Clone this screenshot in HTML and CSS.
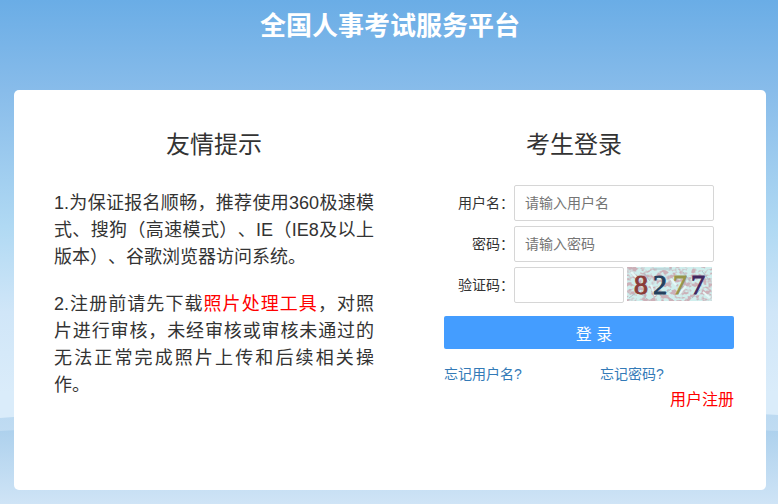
FILE: index.html
```html
<!DOCTYPE html>
<html lang="zh-CN">
<head>
    <meta charset="UTF-8">
    <meta name="viewport" content="width=device-width, initial-scale=1.0">
    <title>全国人事考试服务平台</title>
    <link rel="stylesheet" href="styles.css">
</head>
<body>
    <svg class="waves" viewBox="0 0 778 92" preserveAspectRatio="none" aria-hidden="true">
        <defs>
            <linearGradient id="wave-back" x1="0" y1="0" x2="0" y2="1">
                <stop offset="0" stop-color="#bbd9f1"/>
                <stop offset="1" stop-color="#cfe4f5"/>
            </linearGradient>
            <linearGradient id="wave-front" x1="0" y1="0" x2="0" y2="1">
                <stop offset="0" stop-color="#aacfec"/>
                <stop offset="1" stop-color="#cfe4f6"/>
            </linearGradient>
        </defs>
        <path fill="url(#wave-back)" d="M0 6 C200 -8 560 -6 778 3 V92 H0 Z"/>
        <path fill="url(#wave-front)" d="M0 19 C200 8 560 8 778 19 V92 H0 Z"/>
    </svg>

    <h1>全国人事考试服务平台</h1>

    <main class="card">
        <section class="tips">
            <h2>友情提示</h2>
            <p>1.为保证报名顺畅，推荐使用360极速模式、搜狗（高速模式）、IE（IE8及以上版本）、谷歌浏览器访问系统。</p>
            <p>2.注册前请先下载<a href="#">照片处理工具</a>，对照片进行审核，未经审核或审核未通过的无法正常完成照片上传和后续相关操作。</p>
        </section>

        <section class="login">
            <h2>考生登录</h2>
            <form class="login-form">
                <div class="form-row">
                    <label for="username">用户名：</label>
                    <input type="text" id="username" placeholder="请输入用户名">
                </div>
                <div class="form-row">
                    <label for="password">密码：</label>
                    <input type="password" id="password" placeholder="请输入密码">
                </div>
                <div class="form-row">
                    <label for="captcha">验证码：</label>
                    <input type="text" id="captcha" class="captcha-input">
                    <svg class="captcha-img" viewBox="0 0 85 34" role="img" aria-label="验证码图片">
                        <defs>
                            <filter id="noise" x="0" y="0" width="1" height="1" color-interpolation-filters="sRGB">
                                <feTurbulence type="fractalNoise" baseFrequency="0.2 0.25" numOctaves="2" seed="8"/>
                                <feColorMatrix values="0 0 0 0 0.80  0 0 0 0 0.69  0 0 0 0 0.72  5 0 0 0 -2.2"/>
                            </filter>
                        </defs>
                        <rect width="85" height="34" fill="#cfeeed"/>
                        <rect width="85" height="34" filter="url(#noise)"/>
                        <path d="M27 2h18M2 31l12-9M17 6l6 8M35 29l9-7M56 5l7 9M65 31l8-8M75 4l7 9M12 25l8 7" fill="none" stroke="#afc3ca"/>
                        <path d="M4 5l6 6M24 18l4 11M44 12l5 6M52 27l7-8M76 25l7 6" fill="none" stroke="#e6f8f7" stroke-width="2"/>
                        <g class="captcha-text">
                            <text x="7" y="27" fill="#8b3c38" stroke="#8b3c38">8</text>
                            <text x="26" y="27" fill="#24405e" stroke="#24405e">2</text>
                            <text x="46" y="27" fill="#96954a" stroke="#96954a">7</text>
                            <text x="64" y="27" fill="#40265e" stroke="#40265e">7</text>
                        </g>
                    </svg>
                </div>
                <button type="submit">登 录</button>
                <div class="forgot">
                    <a href="#">忘记用户名?</a>
                    <a href="#">忘记密码?</a>
                </div>
                <a href="#" class="register">用户注册</a>
            </form>
        </section>
    </main>
</body>
</html>
```
FILE: styles.css
```css
/* 全局样式 */
* {
    margin: 0;
    padding: 0;
    box-sizing: border-box;
}

body {
    min-height: 100vh;
    padding: 6px 12px 14px 14px;
    font-family: "Liberation Sans", "Noto Sans CJK SC", sans-serif;
    font-size: 14px;
    color: #333;
    background: linear-gradient(#6aade6, #88bcea 18%, #b0d9f3 45%, #d0e6f8 62%, #daecfa 78%);
    text-spacing-trim: space-all;
}

a {
    text-decoration: none;
}

/* 底部波浪背景 */
.waves {
    position: absolute;
    left: 0;
    bottom: 0;
    z-index: -1;
    width: 100%;
    height: 92px;
}

h1 {
    margin-bottom: 44px;
    font-size: 26px;
    line-height: 40px;
    text-align: center;
    color: #fff;
}

h2 {
    margin-bottom: 22px;
    font-size: 24px;
    font-weight: 400;
    line-height: 36px;
    text-align: center;
}

/* 主体卡片 */
.card {
    display: grid;
    grid-template-columns: 1fr 1fr;
    gap: 40px;
    min-height: 400px;
    padding: 37px 32px 37px 40px;
    border-radius: 5px;
    background: #fff;
}

/* 友情提示 */
.tips p {
    margin-bottom: 20px;
    font-size: 18px;
    line-height: 27px;
    text-align: justify;
}

.tips p a {
    color: #f00;
}

.tips h2 {
    margin-bottom: 27px;
}

/* 登录表单 */
.login-form {
    display: flex;
    flex-direction: column;
    gap: 5px;
    padding-left: 30px;
}

.form-row {
    display: flex;
    align-items: center;
}

.form-row label {
    width: 70px;
    padding-bottom: 2px;
    text-align: right;
}

.form-row input {
    width: 200px;
    height: 36px;
    padding: 0 10px;
    border: 1px solid #d6d6d6;
    border-radius: 2px;
    font: inherit;
    outline: none;
}

.form-row input::placeholder {
    color: #757575;
}

.form-row .captcha-input {
    width: 110px;
}

.captcha-img {
    align-self: flex-start;
    width: 85px;
    height: 34px;
    margin-left: 3px;
}

.captcha-text {
    font-family: "Liberation Serif", serif;
    font-size: 28px;
}

.login-form button {
    height: 33px;
    margin-top: 8px;
    padding-left: 10px;
    border: none;
    border-radius: 2px;
    background: #449dff;
    color: #fff;
    font: inherit;
    font-size: 16px;
    cursor: pointer;
}

.forgot {
    display: grid;
    grid-template-columns: 156px 1fr;
    margin-top: 10px;
    line-height: 20px;
}

.forgot a {
    color: #337ab7;
}

.register {
    align-self: flex-end;
    font-size: 16px;
    line-height: 22px;
    color: #f00;
}
```
